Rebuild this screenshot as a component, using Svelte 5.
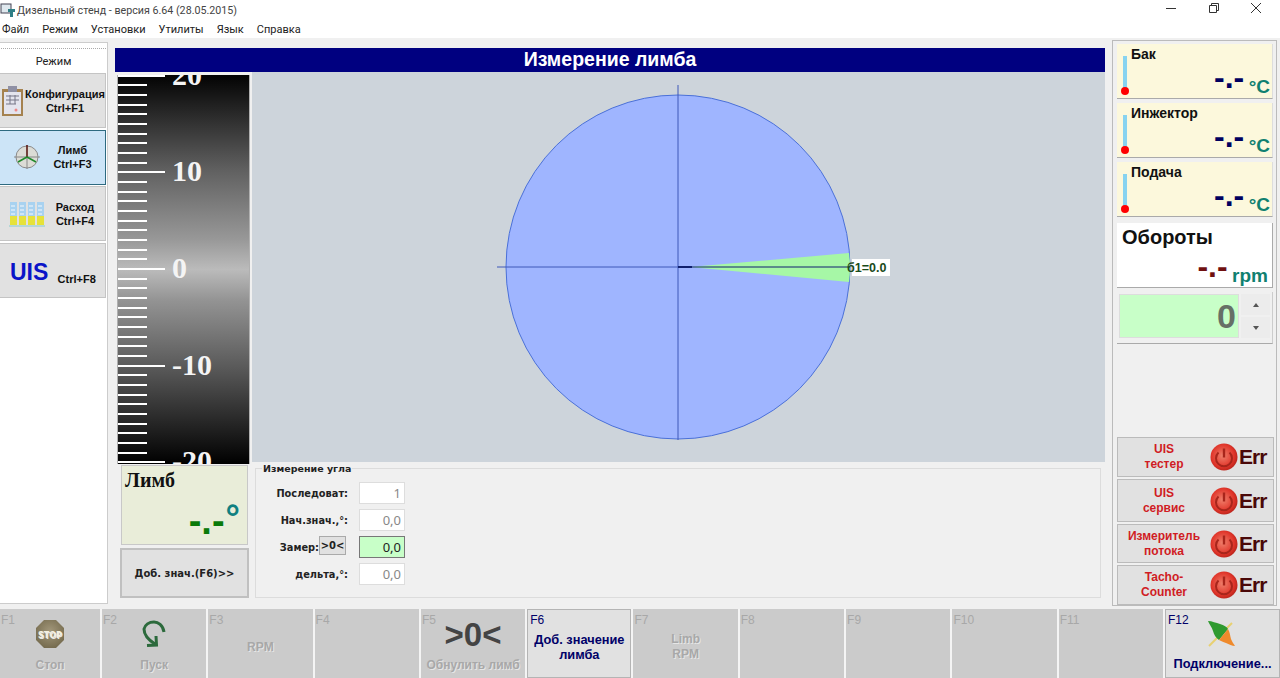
<script>
  const modes = [
    { id: 'cfg', text: ['Конфигурация', 'Ctrl+F1'] },
    { id: 'limb', text: ['Лимб', 'Ctrl+F3'], active: true },
    { id: 'flow', text: ['Расход', 'Ctrl+F4'] },
    { id: 'uis', text: ['Ctrl+F8'] }
  ];
  const menu = ['Файл', 'Режим', 'Установки', 'Утилиты', 'Язык', 'Справка'];
  const temps = ['Бак', 'Инжектор', 'Подача'];
  const services = [
    { text: ['UIS', 'тестер'], h: 40 },
    { text: ['UIS', 'сервис'], h: 43 },
    { text: ['Измеритель', 'потока'], h: 39 },
    { text: ['Tacho-', 'Counter'], h: 40 }
  ];
  const keys = [
    { f: 'F1', icon: 'stop', label: 'Стоп' },
    { f: 'F2', icon: 'run', label: 'Пуск' },
    { f: 'F3', mid: ['RPM'] },
    { f: 'F4' },
    { f: 'F5', icon: 'zero', label: 'Обнулить лимб' },
    { f: 'F6', mid: ['Доб. значение', 'лимба'], on: true },
    { f: 'F7', mid: ['Limb', 'RPM'] },
    { f: 'F8' },
    { f: 'F9' },
    { f: 'F10' },
    { f: 'F11' },
    { f: 'F12', icon: 'link', label: 'Подключение...', on: true }
  ];
  const fields = [
    { label: 'Последоват:', value: '1' },
    { label: 'Нач.знач.,°:', value: '0,0' },
    { label: 'Замер:', value: '0,0', zero: true },
    { label: 'дельта,°:', value: '0,0' }
  ];

  // scale ticks every 9.67px, major every 10 units
  const zeroY = 194;
  const step = 9.67;
  const ticks = [];
  for (let i = -21; i <= 21; i++) ticks.push({ y: Math.round(zeroY + i * step), major: i % 10 === 0 });
  const scaleLabels = [
    { t: '20', y: zeroY - 193.4 },
    { t: '10', y: zeroY - 96.7 },
    { t: '0', y: zeroY },
    { t: '-10', y: zeroY + 96.7 },
    { t: '-20', y: zeroY + 193.4 }
  ];
</script>

<div class="window">
  <header class="title">
    <svg class="appicon" width="16" height="16" viewBox="0 0 16 16">
      <rect x="1" y="2" width="10" height="9" fill="#dfe8ee" stroke="#445" />
      <path d="M8 7h7v3h-2v5h-3v-5H8z" fill="#2f7f86" />
    </svg>
    <span>Дизельный стенд - версия 6.64 (28.05.2015)</span>
    <div class="winbtns">
      <svg width="12" height="12" viewBox="0 0 12 12"><path d="M1 6.5h10" stroke="#333" /></svg>
      <svg width="12" height="12" viewBox="0 0 12 12" fill="none" stroke="#333"><path d="M1.5 3.5h7v7h-7zM3.5 3.5v-2h7v7h-2" /></svg>
      <svg width="12" height="12" viewBox="0 0 12 12"><path d="M1 1l10 10M11 1L1 11" stroke="#333" /></svg>
    </div>
  </header>

  <nav class="menu">
    {#each menu as item}<span>{item}</span>{/each}
  </nav>

  <main class="body">
    <aside class="modes">
      <div class="grip"></div>
      <div class="modes-title">Режим</div>
      {#each modes as m}
        <div class="mode" class:active={m.active}>
          {#if m.id === 'cfg'}
            <svg class="mode-ic cfg" width="24" height="32" viewBox="0 0 24 32">
              <rect x="1" y="4" width="21" height="27" fill="#a5824f" />
              <rect x="3" y="7" width="17" height="22" fill="#e4e4ee" />
              <rect x="7" y="1" width="9" height="6" fill="#8f90a4" />
              <path d="M5 11h13M5 15h13M5 19h10M9 10v9M14 10v9" stroke="#778" fill="none" />
              <circle cx="15" cy="25" r="1.5" fill="#e88" />
            </svg>
          {:else if m.id === 'limb'}
            <svg class="mode-ic limbic" width="26" height="26" viewBox="0 0 26 26">
              <circle cx="13" cy="13" r="11" fill="#dcdcd6" stroke="#8a8a8a" />
              <path d="M0 13h26M13 13v12" stroke="#888" />
              <path d="M13 1v12" stroke="#5a1a14" stroke-width="1.6" />
              <path d="M13 13L4 18M13 13l9 5" stroke="#1f8a2c" stroke-width="1.6" />
            </svg>
          {:else if m.id === 'flow'}
            <svg class="mode-ic flowic" width="36" height="26" viewBox="0 0 36 26">
              {#each [1, 10, 19, 28] as x}
                <rect {x} y="1" width="7" height="23" fill="#a8d2f0" />
                <rect {x} y="15" width="7" height="9" fill="#e6e23a" />
                <path d="M{x + 1} 5h4M{x + 1} 9h4M{x + 1} 13h4" stroke="#f4f8fc" />
              {/each}
              <path d="M0 25h36" stroke="#8cc" />
            </svg>
          {:else}
            <span class="uis">UIS</span>
          {/if}
          <div class="mode-text" class:low={m.id === 'uis'}>
            {#each m.text as line}<div>{line}</div>{/each}
          </div>
        </div>
      {/each}
    </aside>

    <section class="center">
      <div class="head">Измерение лимба</div>
      <div class="work">
        <div class="gauge-col">
          <svg class="scale" width="133" height="389" viewBox="0 0 133 389">
            <defs>
              <linearGradient id="scalebg" x1="0" y1="0" x2="0" y2="1">
                <stop offset="0" stop-color="#030303" />
                <stop offset="0.25" stop-color="#626262" />
                <stop offset="0.42" stop-color="#979797" />
                <stop offset="0.5" stop-color="#bbb" />
                <stop offset="0.58" stop-color="#939393" />
                <stop offset="0.75" stop-color="#5a5a5a" />
                <stop offset="1" stop-color="#000" />
              </linearGradient>
            </defs>
            <rect width="133" height="389" fill="url(#scalebg)" />
            {#each ticks as t}
              <rect x="1" y={t.y - 1} width={t.major ? 47 : 29} height="2" fill="#fff" />
            {/each}
            {#each scaleLabels as l}
              <text class="scale-num" x="55" y={l.y + 9}>{l.t}</text>
            {/each}
            <rect x="0.5" y="-1" width="132" height="391" fill="none" stroke="#b0b0b0" />
          </svg>
          <div class="limb-card">
            <div class="limb-name">Лимб</div>
            <div class="limb-value"><span class="dash">-.-</span><span class="deg">°</span></div>
          </div>
          <button class="add">Доб. знач.(F6)&gt;&gt;</button>
        </div>

        <div class="right-col">
          <svg class="chart" width="853" height="390" viewBox="0 0 853 390">
            <circle cx="426" cy="195" r="172" fill="#9fb5ff" stroke="#4a70d8" />
            <path d="M438 195L597 181Q599 195 597 210Z" fill="#a6f7a6" />
            <path d="M426 13V368M245 195H426" stroke="#3f58b8" />
            <path d="M426 195H598" stroke="#10206e" />
            <path d="M426 194h14v2h-14z" fill="#10206e" />
            <rect x="600" y="187" width="38" height="17" fill="#fff" />
            <text class="mark" x="595" y="200">б1=0.0</text>
          </svg>
          <fieldset class="group">
            <legend>Измерение угла</legend>
            {#each fields as f}
              <div class="row">
                <label class:shift={f.zero}>{f.label}</label>
                {#if f.zero}<span class="zero">&gt;0&lt;</span>{/if}
                <div class="input" class:live={f.zero}>{f.value}</div>
              </div>
            {/each}
          </fieldset>
        </div>
      </div>
    </section>

    <aside class="side">
      {#each temps as name}
        <div class="temp">
          <div class="thermo"><i></i><b></b></div>
          <div class="temp-body">
            <div class="temp-name">{name}</div>
            <div class="read"><span class="dash navy">-.-</span> <span class="unit">°C</span></div>
          </div>
        </div>
      {/each}
      <div class="rpm">
        <div class="rpm-name">Обороты</div>
        <div class="read"><span class="dash maroon">-.-</span> <span class="unit">rpm</span></div>
      </div>
      <div class="spin">
        <div class="spin-val">0</div>
        <div class="spin-btns">
          <span><svg width="6" height="4" viewBox="0 0 6 4"><path d="M3 0l3 4H0z" fill="#555" /></svg></span>
          <span><svg width="6" height="4" viewBox="0 0 6 4"><path d="M3 4L0 0h6z" fill="#555" /></svg></span>
        </div>
      </div>
      <div class="services">
        {#each services as s}
          <div class="service" style="height: {s.h}px">
            <div class="service-text">{#each s.text as line}<div>{line}</div>{/each}</div>
            <svg width="28" height="28" viewBox="0 0 28 28">
              <defs>
                <radialGradient id="ball" cx="0.45" cy="0.45" r="0.6">
                  <stop offset="0" stop-color="#f0806c" />
                  <stop offset="0.7" stop-color="#e0352a" />
                  <stop offset="1" stop-color="#b32018" />
                </radialGradient>
              </defs>
              <circle cx="14" cy="14" r="13.5" fill="url(#ball)" />
              <path d="M8.5 9.5a8 8 0 1 0 11 0" fill="none" stroke="#a8251b" stroke-width="2" />
              <path d="M14 5.5v9" stroke="#a8251b" stroke-width="2.4" />
            </svg>
            <span class="err">Err</span>
          </div>
        {/each}
      </div>
    </aside>
  </main>

  <footer class="keys">
    {#each keys as k}
      <div class="key" class:on={k.on}>
        <span class="f">{k.f}</span>
        {#if k.icon === 'stop'}
          <svg class="key-ic" width="30" height="30" viewBox="0 0 30 30">
            <defs>
              <radialGradient id="stopbg" cx="0.5" cy="0.4" r="0.7">
                <stop offset="0" stop-color="#a2977a" />
                <stop offset="1" stop-color="#6f6548" />
              </radialGradient>
            </defs>
            <path d="M9 1h12l8 8v12l-8 8H9l-8-8V9z" fill="url(#stopbg)" />
            <text class="stop" x="15" y="18.5">STOP</text>
          </svg>
        {:else if k.icon === 'run'}
          <svg class="key-ic" width="30" height="30" viewBox="0 0 30 30">
            <path d="M25 13C24 6 19 3 15 3C10 3 6 6 5 10C5 15 8 20 16 25" fill="none" stroke="#2c6a3c" stroke-width="3" />
            <path d="M8 26.5L17.5 26L17 17" fill="none" stroke="#2c6a3c" stroke-width="3" />
          </svg>
        {:else if k.icon === 'zero'}
          <span class="bigzero">&gt;0&lt;</span>
        {:else if k.icon === 'link'}
          <svg class="key-ic" width="32" height="32" viewBox="0 0 32 32">
            <path d="M3 27L26 4" stroke="#e8d070" stroke-width="2" />
            <path d="M2 2C6 2 10 4 14 5C18 6 21 8 22 10L13 21C10 19 8 16 7 12C6 8 3 5 2 2Z" fill="#2f9a2f" />
            <path d="M22 10C24 13 24 17 25 20C26 23 28 25 29 27C26 27 23 25 20 24C17 23 15 22 13 21Z" fill="#ef8a2c" />
          </svg>
        {/if}
        {#if k.mid}
          <div class="key-mid" class:single={k.mid.length === 1}>{#each k.mid as line}<div>{line}</div>{/each}</div>
        {/if}
        {#if k.label}<div class="key-label">{k.label}</div>{/if}
      </div>
    {/each}
  </footer>
</div>

<style>
  :global(body) {
    margin: 0;
    background: #f0f0f0;
  }

  .window {
    width: 1280px;
    height: 678px;
    display: flex;
    flex-direction: column;
    overflow: hidden;
    font-family: "Liberation Sans", Arial, sans-serif;
    background: #f0f0f0;
  }

  .title {
    height: 20px;
    flex: none;
    display: flex;
    align-items: center;
    background: #fff;
    font: 10.7px Roboto, sans-serif;
    color: #444;
  }
  .appicon {
    margin: 0 1px 0 0;
  }
  .winbtns {
    margin-left: auto;
    display: flex;
    gap: 30.5px;
    padding: 0 18px 4px 0;
  }

  .menu {
    height: 18px;
    flex: none;
    display: flex;
    gap: 13px;
    align-items: center;
    padding-left: 2px;
    background: #fff;
    font: 11px Roboto, sans-serif;
    color: #222;
  }

  .body {
    flex: 1;
    min-height: 0;
    display: flex;
    padding-top: 4px;
  }

  .modes {
    width: 108px;
    height: 562px;
    flex: none;
    box-sizing: border-box;
    background: #fff;
    border: 1px solid #ccc;
    border-left: 0;
  }
  .grip {
    margin: 5px 1px 0;
    border-top: 1px dotted #aaa;
  }
  .modes-title {
    height: 24px;
    text-align: center;
    font: 11px/26px Roboto, sans-serif;
    color: #222;
  }
  .mode {
    width: 106px;
    height: 55px;
    margin-bottom: 1.5px;
    box-sizing: border-box;
    display: flex;
    align-items: center;
    background: #e1e1e1;
    border: 1px solid #c4c4c4;
    border-left: 0;
  }
  .mode.active {
    background: #cce4f7;
    border: 1px solid #2d6a80;
    border-left: 0;
  }
  .mode-ic {
    flex: none;
  }
  .cfg {
    margin: 0 0 0 1px;
  }
  .limbic {
    margin-left: 14px;
  }
  .flowic {
    margin-left: 9px;
  }
  .mode-text {
    flex: 1;
    text-align: center;
    font-size: 11px;
    font-weight: 700;
    line-height: 14px;
    color: #111;
    white-space: nowrap;
  }
  .mode-text.low {
    padding-top: 17px;
  }
  .uis {
    margin: 4px 0 0 10px;
    font-size: 23px;
    font-weight: 700;
    color: #0a14c8;
  }

  .center {
    width: 990px;
    flex: none;
    margin-left: 7px;
    padding-top: 6px;
    display: flex;
    flex-direction: column;
  }
  .head {
    height: 24px;
    line-height: 23px;
    flex: none;
    background: #000080;
    color: #fff;
    text-align: center;
    font-size: 19.5px;
    font-weight: 700;
  }
  .work {
    display: flex;
  }
  .gauge-col {
    width: 137px;
    flex: none;
    padding: 3px 0 0 2px;
    box-sizing: border-box;
  }
  .scale {
    display: block;
  }
  .scale-num {
    font: 700 30px "Liberation Serif", serif;
    fill: #f4f4f4;
  }
  .limb-card {
    width: 127px;
    height: 80px;
    margin: 1px 0 0 4px;
    box-sizing: border-box;
    padding: 3px;
    background: #e9edd9;
    border: 1px solid #c8c8c8;
    display: flex;
    flex-direction: column;
    justify-content: space-between;
  }
  .limb-name {
    font: 700 20px "Liberation Serif", serif;
    color: #111;
  }
  .limb-value {
    align-self: flex-end;
    display: flex;
    align-items: flex-start;
    height: 40px;
    padding-right: 4px;
  }
  .limb-value .dash {
    font-size: 38px;
    line-height: 34px;
    color: #0a7a0a;
    margin-top: 3px;
  }
  .deg {
    font: 700 36px/34px "Liberation Sans", sans-serif;
    color: #108080;
    margin-left: 1px;
  }
  .add {
    display: block;
    width: 129px;
    height: 50px;
    margin: 3px 0 0 3px;
    padding: 0;
    background: #e1e1e1;
    border: 2px solid #c0c0c0;
    font: 700 10px "DejaVu Sans", sans-serif;
    color: #222;
  }

  .right-col {
    flex: 1;
    min-width: 0;
  }
  .chart {
    display: block;
    background: #cdd4db;
  }
  .mark {
    font: 700 12.5px "Liberation Sans", sans-serif;
    fill: #1a4a1a;
  }
  .group {
    width: 846px;
    height: 130px;
    margin: 6px 0 0 3px;
    padding: 13px 0 0 0;
    box-sizing: border-box;
    border: 1px solid #dcdcdc;
    position: relative;
    display: flex;
    flex-direction: column;
    gap: 5px;
  }
  .group legend {
    position: absolute;
    top: -6px;
    left: 6px;
    padding: 0 1px;
    background: #f0f0f0;
    font: 700 9.5px "DejaVu Sans", sans-serif;
    color: #222;
  }
  .row {
    height: 22px;
    display: flex;
    align-items: center;
    justify-content: flex-end;
    width: 149px;
    position: relative;
  }
  .row label {
    font: 700 9.8px "DejaVu Sans", sans-serif;
    color: #222;
    position: absolute;
    right: 57px;
    white-space: nowrap;
  }
  .row label.shift {
    right: 86px;
  }
  .zero {
    position: absolute;
    left: 63px;
    top: 0;
    width: 27px;
    height: 19px;
    box-sizing: border-box;
    border: 1px solid #aaa;
    background: #e1e1e1;
    text-align: center;
    font: 700 10px/17px "DejaVu Sans", sans-serif;
    color: #222;
  }
  .input {
    width: 46px;
    height: 22px;
    box-sizing: border-box;
    background: #fff;
    border: 1px solid #ddd;
    text-align: right;
    padding-right: 3px;
    font: 13px/20px "Noto Sans", sans-serif;
    color: #888;
  }
  .input.live {
    background: #c8ffc8;
    border-color: #777;
    color: #222;
  }

  .side {
    width: 165px;
    height: 566px;
    flex: none;
    box-sizing: border-box;
    margin: -2px 0 0 7px;
    padding: 3px 2px 0 4px;
    border: 1px solid #bbb;
    display: flex;
    flex-direction: column;
  }
  .temp {
    height: 55px;
    flex: none;
    box-sizing: border-box;
    width: 156px;
    margin-bottom: 4px;
    display: flex;
    background: #fcf8dc;
    border-bottom: 1px solid #aaa;
    border-right: 1px solid #ddd;
  }
  .thermo {
    width: 14px;
    flex: none;
    padding-left: 4px;
    box-sizing: border-box;
  }
  .thermo i {
    display: block;
    width: 4px;
    height: 34px;
    margin: 12px 0 0 2px;
    background: #87d3f0;
  }
  .thermo b {
    display: block;
    width: 8px;
    height: 8px;
    margin-top: -3px;
    border-radius: 50%;
    background: #f00;
  }
  .temp-body {
    flex: 1;
    display: flex;
    flex-direction: column;
    justify-content: space-between;
  }
  .temp-name {
    font-size: 14px;
    font-weight: 700;
    color: #111;
    padding-top: 2px;
  }
  .read {
    text-align: right;
    padding-right: 2px;
    height: 26px;
    line-height: 26px;
    white-space: nowrap;
  }
  .dash {
    font-weight: 700;
    font-size: 32px;
    line-height: 10px;
    vertical-align: 5px;
  }
  .navy {
    color: #000060;
  }
  .maroon {
    color: #701010;
  }
  .unit {
    font-size: 19px;
    font-weight: 700;
    color: #108070;
  }
  .rpm {
    height: 65px;
    flex: none;
    width: 156px;
    margin-top: 2px;
    padding: 3px 2px 0 5px;
    box-sizing: border-box;
    display: flex;
    flex-direction: column;
    justify-content: space-between;
    background: #fff;
    border-bottom: 1px solid #aaa;
    border-right: 1px solid #aaa;
  }
  .rpm-name {
    font-size: 20px;
    font-weight: 700;
    color: #111;
  }
  .spin {
    height: 52px;
    flex: none;
    width: 156px;
    margin-top: 4px;
    padding: 2px;
    box-sizing: border-box;
    display: flex;
    gap: 2px;
    border-bottom: 1px solid #aaa;
    border-right: 1px solid #ccc;
  }
  .spin-val {
    width: 120px;
    height: 44px;
    box-sizing: border-box;
    background: #c8ffc8;
    border: 1px solid #ddd;
    text-align: right;
    padding-right: 2px;
    font: 700 34px/42px "Liberation Sans", sans-serif;
    color: #667066;
  }
  .spin-btns {
    flex: 1;
    display: flex;
    flex-direction: column;
    gap: 2px;
  }
  .spin-btns span {
    height: 21px;
    display: flex;
    align-items: center;
    justify-content: center;
    background: #ececec;
  }
  .services {
    margin-top: auto;
    display: flex;
    flex-direction: column;
    gap: 2px;
  }
  .service {
    flex: none;
    box-sizing: border-box;
    display: flex;
    align-items: center;
    background: #e1e1e1;
    border: 1px solid #bbb;
  }
  .service-text {
    width: 92px;
    flex: none;
    text-align: center;
    font-size: 12px;
    font-weight: 700;
    line-height: 15px;
    color: #d01c24;
  }
  .err {
    font-size: 21px;
    font-weight: 700;
    letter-spacing: -1px;
    color: #4a0808;
    margin-left: 1px;
  }

  .keys {
    height: 69px;
    flex: none;
    display: grid;
    grid-template-columns: 100px repeat(10, 104.3px) 1fr;
    gap: 2px;
    background: #f4f4f4;
  }
  .key {
    background: #cbcbcb;
    position: relative;
    box-sizing: border-box;
    display: flex;
    flex-direction: column;
    align-items: center;
    color: #a8a8a8;
    font-weight: 700;
    font-size: 12px;
    padding-top: 10px;
    text-shadow: 1px 1px 0 #e6e6e6;
  }
  .key.on {
    background: #e1e1e1;
    border: 1px solid #b4b4b4;
    color: #000068;
    font-size: 12.8px;
    text-shadow: none;
    padding-top: 9px;
  }
  .f {
    position: absolute;
    top: 4px;
    left: 1px;
    font-size: 12px;
    font-weight: 400;
    color: #a8a8a8;
    text-shadow: none;
  }
  .key.on .f {
    top: 3px;
    left: 2px;
    color: #000068;
  }
  .key-ic {
    display: block;
    flex: none;
  }
  .stop {
    font: 700 8px "DejaVu Sans", sans-serif;
    fill: #f4f0e0;
    text-anchor: middle;
  }
  .key-label {
    position: absolute;
    bottom: 6px;
    left: 0;
    right: 0;
    text-align: center;
    white-space: nowrap;
  }
  .key-mid {
    margin-top: 13px;
    text-align: center;
    line-height: 15px;
    white-space: nowrap;
  }
  .key-mid.single {
    margin-top: 21px;
  }
  .bigzero {
    font-size: 33px;
    line-height: 32px;
    font-weight: 700;
    color: #444;
    text-shadow: none;
  }
</style>
